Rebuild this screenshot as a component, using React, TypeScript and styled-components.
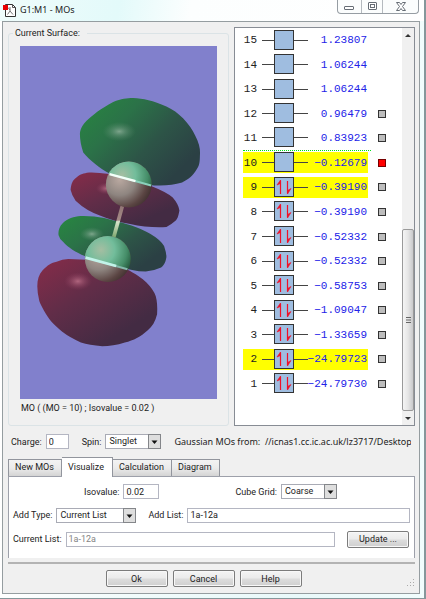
import React, { useState } from "react";
import styled, { createGlobalStyle } from "styled-components";

const UI_FONT = 'Roboto, Arial, sans-serif';
const TITLE_FONT = '"Noto Sans", "Open Sans", sans-serif';
const MONO_FONT = '"Liberation Mono", "Courier New", monospace';

const GlobalStyle = createGlobalStyle`
  *, *::before, *::after { box-sizing: border-box; }
  body { margin: 0; background: #eef8f9; }
  button, input, select { font: inherit; color: inherit; margin: 0; }
`;

const Frame = styled.div`
  display: flex;
  flex-direction: column;
  min-height: 100vh;
  border: solid #85979b;
  border-width: 0 2px 2px 0;
  background: linear-gradient(90deg, #ffffff 0, #f2fcfc 30%, #e9f9fa 70%, #f1fdfd 100%);
  font: 9px/12px ${UI_FONT};
  color: #222;
`;

const TitleBar = styled.header`
  display: flex;
  align-items: flex-start;
  height: 21px;
  padding-left: 3px;
  background: linear-gradient(100deg, #effcfb 0, #e3fafa 28%, #fcfefe 45%, #ffffff 100%);
`;

const AppIcon = styled.svg`
  width: 13px;
  height: 14px;
  margin: 3px 4px 0 0;
`;

const Title = styled.h1`
  flex: 1;
  margin: 3px 0 0;
  font: 9px/14px ${TITLE_FONT};
  color: #222;
`;

const WindowButtons = styled.div`
  display: flex;
  height: 14px;
  margin-right: 5px;
  border: 1px solid #969da3;
  border-top: 0;
  border-radius: 0 0 4px 4px;
  background: #fbfdfd;
`;

const WindowButton = styled.button<{ $width: number }>`
  display: grid;
  place-items: center;
  width: ${(p) => p.$width}px;
  padding: 0;
  border: 0;
  background: none;

  & + & {
    border-left: 1px solid #b5babf;
  }
`;

const Client = styled.main`
  flex: 1;
  display: flex;
  flex-direction: column;
  min-width: 0;
  margin: 0 4px 4px 2px;
  padding: 5px 4px 6px 5px;
  border: 1px solid #959da0;
  background: #f0f0f0;
`;

const Views = styled.div`
  flex: 1;
  display: grid;
  grid-template-columns: minmax(0, 1fr) 181px;
  gap: 5px;
`;

const Surface = styled.fieldset`
  display: flex;
  flex-direction: column;
  min-width: 0;
  margin: 0;
  padding: 6px 11px 11px;
  border: 1px solid #dbe3e6;
  border-radius: 3px;

  legend {
    margin-left: -7px;
    padding: 0 7px 0 2px;
    line-height: 13px;
  }
`;

const Viewport = styled.div`
  flex: 1;
  display: flex;
  background: #8180cc;

  svg {
    width: 100%;
    height: 353px;
  }
`;

const Caption = styled.p`
  margin: 3px 0 0 1px;
`;

const LevelPanel = styled.section`
  display: flex;
  border: 1px solid #878c94;
  background: #fff;
`;

const LevelList = styled.ul`
  flex: 1;
  display: grid;
  grid-auto-rows: 1fr;
  margin: 0;
  padding: 0 0 29px 8px;
  list-style: none;
  font: 11px/20px ${MONO_FONT};
`;

const LevelRow = styled.li`
  display: flex;
  align-items: center;
  gap: 7px;
`;

const LevelCell = styled.div<{ $gap: boolean }>`
  display: flex;
  align-items: center;
  width: 128px;
  height: 100%;
  border-bottom: ${(p) => (p.$gap ? "1px dotted #00e018" : "0")};
`;

const Level = styled.div<{ $marked: boolean }>`
  display: flex;
  align-items: center;
  width: 125px;
  height: 21px;
  background: ${(p) => (p.$marked ? "#ffff00" : "transparent")};
`;

const LevelNumber = styled.span`
  display: flex;
  justify-content: flex-end;
  width: 14px;
  margin-right: 5px;
  color: #222;
`;

const Energy = styled.output`
  flex: 1;
  display: flex;
  justify-content: flex-end;
  margin: 0 1px 0 -10px;
  color: #2222e8;
`;

const Orbital = styled.svg`
  width: 46px;
  height: 21px;
`;

const LevelCheck = styled.input<{ $active: boolean }>`
  appearance: none;
  width: 8px;
  height: 8px;
  border: 1px solid ${(p) => (p.$active ? "#700" : "#333")};
  background: ${(p) => (p.$active ? "#f00" : "#bdbdbd")};
`;

const ScrollBar = styled.div`
  display: flex;
  flex-direction: column;
  width: 12px;
  background: #f0f0f0;
`;

const ScrollButton = styled.button`
  display: grid;
  place-items: center;
  height: 14px;
  padding: 0;
  border: 0;
  background: #f0f0f0;
`;

const ScrollSpace = styled.div`
  flex: 188;
`;

const ScrollThumb = styled.div`
  flex: 181;
  display: grid;
  place-items: center;
  border: 1px solid #9a9a9a;
  border-radius: 2px;
  background: linear-gradient(90deg, #f5f5f5, #e6e6e6 50%, #c9c9cb);
`;

const StateRow = styled.div`
  display: flex;
  align-items: center;
  gap: 5px;
  height: 15px;
  margin: 8px 4px 8px 3px;
`;

const Field = styled.label<{ $grow?: boolean; $gap?: number }>`
  display: flex;
  align-items: center;
  gap: 4px;
  min-width: 0;
  flex: ${(p) => (p.$grow ? "1" : "none")};
  margin-left: ${(p) => p.$gap ?? 0}px;
  white-space: nowrap;
`;

const TextBox = styled.input<{ $width?: number }>`
  ${(p) => (p.$width ? `width: ${p.$width}px;` : "flex: 1; width: 0;")}
  height: 15px;
  padding: 0 2px;
  border: 1px solid #b4b6c2;
  border-radius: 0;
  background: #fff;

  &:disabled {
    color: #858585;
  }
`;

const SelectBox = styled.span<{ $width: number }>`
  position: relative;
  display: flex;
  width: ${(p) => p.$width}px;
  height: 15px;

  select {
    appearance: none;
    width: 100%;
    padding: 0 14px 1px 3px;
    border: 1px solid #a9abb5;
    border-radius: 0;
    background: #fff;
  }

  svg {
    position: absolute;
    top: 0;
    right: 0;
    width: 13px;
    height: 15px;
    pointer-events: none;
  }
`;

const Source = styled.span`
  flex: 1;
  min-width: 0;
  margin-left: 8px;
  overflow: hidden;
  font: 9px/15px ${TITLE_FONT};
  white-space: pre;
`;

const Tabs = styled.div`
  display: flex;
  align-items: flex-end;
  height: 19px;
`;

const Tab = styled.button<{ $active: boolean; $width: number }>`
  width: ${(p) => p.$width}px;
  height: ${(p) => (p.$active ? 20 : 17)}px;
  margin-bottom: ${(p) => (p.$active ? -1 : 0)}px;
  padding: 0 6px 2px;
  border: 1px solid #92959d;
  border-left-width: ${(p) => (p.$active ? 0 : 1)}px;
  border-bottom: 0;
  background: ${(p) => (p.$active ? "#fff" : "linear-gradient(#f3f3f3, #ebebeb 50%, #d4d4d4)")};
  text-align: left;
  white-space: nowrap;
  z-index: ${(p) => (p.$active ? 1 : 0)};

  & + & {
    border-left: 0;
  }
`;

const TabPanel = styled.section`
  display: flex;
  flex-direction: column;
  gap: 8px;
  padding: 7px 4px 11px;
  border: 1px solid #9da0aa;
  border-bottom: 0;
  background: #fff;
`;

const FormRow = styled.div<{ $indent?: number }>`
  display: flex;
  align-items: center;
  height: ${(p) => (p.$indent ? 15 : 16)}px;
  padding-left: ${(p) => p.$indent ?? 0}px;
`;

const PushButton = styled.button`
  width: 62px;
  height: 17px;
  padding: 0;
  border: 1px solid #7c7c7c;
  border-radius: 2px;
  background: linear-gradient(#f4f4f4, #ebebeb 48%, #dddddd 52%, #cfcfcf);
  box-shadow: inset 0 0 0 1px #f8f8f8;
`;

const UpdateSlot = styled.div`
  flex: none;
  display: flex;
  margin-left: 12px;
  padding-right: 1px;
`;

const Divider = styled.hr`
  width: 100%;
  height: 2px;
  margin: 4px 0 6px;
  border: 0;
  background: #b3b3b3;
`;

const Footer = styled.footer`
  display: grid;
  grid-template-columns: 1fr auto 1fr;
  align-items: end;
`;

const FooterButtons = styled.div`
  grid-column: 2;
  display: flex;
  gap: 5px;
  margin-right: 16px;
`;

const Grip = styled.svg`
  width: 8px;
  height: 8px;
  justify-self: end;
`;

type LevelData = { n: number; energy: string; filled?: boolean; marked?: boolean; gap?: boolean };

const LEVELS: LevelData[] = [
  { n: 15, energy: "1.23807" },
  { n: 14, energy: "1.06244" },
  { n: 13, energy: "1.06244" },
  { n: 12, energy: "0.96479" },
  { n: 11, energy: "0.83923", gap: true },
  { n: 10, energy: "−0.12679", marked: true },
  { n: 9, energy: "−0.39190", filled: true, marked: true },
  { n: 8, energy: "−0.39190", filled: true },
  { n: 7, energy: "−0.52332", filled: true },
  { n: 6, energy: "−0.52332", filled: true },
  { n: 5, energy: "−0.58753", filled: true },
  { n: 4, energy: "−1.09047", filled: true },
  { n: 3, energy: "−1.33659", filled: true },
  { n: 2, energy: "−24.79723", filled: true, marked: true },
  { n: 1, energy: "−24.79730", filled: true },
];

const TABS = [
  { name: "New MOs", width: 54 },
  { name: "Visualize", width: 51 },
  { name: "Calculation", width: 59 },
  { name: "Diagram", width: 48 },
];

function OrbitalBox({ filled }: { filled?: boolean }) {
  return (
    <Orbital viewBox="0 0 46 21" aria-hidden="true">
      <path d="M0 10.5H46" stroke="#444" strokeWidth="1" />
      <rect x="12.5" y="0.5" width="19" height="19" fill="#9fbde0" stroke="#333" />
      {filled && (
        <g stroke="#f01028" fill="#f01028">
          <path d="M18.5 17V3.5" strokeWidth="1.2" />
          <path d="M18.500 3L15 8L18.500 6.500Z" strokeWidth="0.6" />
          <path d="M25.500 4V16.5" strokeWidth="1.2" />
          <path d="M25.500 17L29 11.500L25.500 13.500Z" strokeWidth="0.6" />
        </g>
      )}
    </Orbital>
  );
}

function Molecule() {
  return (
    <svg viewBox="60 18 592 1059" preserveAspectRatio="xMidYMin meet" role="img" aria-label="Molecular orbital surface">
      <defs>
        <linearGradient id="green" x1="0" y1="0.2" x2="0.85" y2="0.8">
          <stop offset="0" stopColor="#288242" />
          <stop offset="0.3" stopColor="#2b7248" />
          <stop offset="0.65" stopColor="#2d5447" />
          <stop offset="1" stopColor="#2b4044" />
        </linearGradient>
        <linearGradient id="red" x1="0.05" y1="0.1" x2="0.7" y2="0.85">
          <stop offset="0" stopColor="#802c49" />
          <stop offset="0.45" stopColor="#612d48" />
          <stop offset="1" stopColor="#432b43" />
        </linearGradient>
        <radialGradient id="shine">
          <stop offset="0" stopColor="#a0bca8" stopOpacity="0.7" />
          <stop offset="0.4" stopColor="#83a891" stopOpacity="0.4" />
          <stop offset="1" stopColor="#609070" stopOpacity="0" />
        </radialGradient>
        <radialGradient id="redShine">
          <stop offset="0" stopColor="#c77890" stopOpacity="0.75" />
          <stop offset="1" stopColor="#904060" stopOpacity="0" />
        </radialGradient>
        <radialGradient id="atomGreen" cx="0.35" cy="0.3" r="0.75">
          <stop offset="0" stopColor="#a5bea2" />
          <stop offset="0.4" stopColor="#72bd9b" />
          <stop offset="0.75" stopColor="#458d68" />
          <stop offset="1" stopColor="#1f5137" />
        </radialGradient>
        <radialGradient id="atomGrey" cx="0.3" cy="0.4" r="0.75">
          <stop offset="0" stopColor="#b9a8a0" />
          <stop offset="0.45" stopColor="#8e8580" />
          <stop offset="0.8" stopColor="#5b4543" />
          <stop offset="1" stopColor="#3f302f" />
        </radialGradient>
        <linearGradient id="bond" x1="0" y1="0" x2="0" y2="1">
          <stop offset="0" stopColor="#927675" />
          <stop offset="0.45" stopColor="#a48a87" />
          <stop offset="0.5" stopColor="#d7e5cc" />
          <stop offset="1" stopColor="#7da56d" />
        </linearGradient>
        <clipPath id="upperCap">
          <path d="M310 350H470V441L320 400Z" />
        </clipPath>
        <clipPath id="lowerCap">
          <path d="M240 570H410V695L250 652Z" />
        </clipPath>
      </defs>
      <path fill="url(#green)" d="M240 282C241 265 251 252 260 243C280 224 302 206 340 186C365 176 380 174 400 174C430 175 460 182 500 200C520 209 534 220 550 235C567 253 579 270 586 286C597 307 602 325 601 340C600 357 602 372 592 387C580 408 565 420 547 428C525 434 500 438 472 437C448 437 418 430 400 425C370 416 350 410 329 401C300 386 270 362 250 338Q240 308 240 282Z" />
      <path fill="url(#red)" d="M212 450C214 430 219 423 225 417C238 405 247 402 261 399C280 396 300 400 329 403L450 437Q501 457 519 473Q537 494 539 512C537 520 537 531 529 542Q516 554 500 562C466 564 426 561 391 553Q343 545 300 527Q260 514 227 483Q215 465 212 450Z" />
      <path fill="url(#green)" d="M176 587C174 575 178 561 187 552C203 536 222 531 242 529Q280 528 313 535L370 550C403 559 425 568 451 582Q482 600 493 619Q500 640 500 652C498 665 495 675 484 684Q463 694 438 696C410 695 384 688 355 681L257 650C230 640 204 623 190 607Q178 597 176 587Z" />
      <path fill="url(#red)" d="M112 740C112 720 117 704 128 692C143 676 154 669 170 666Q187 658 205 658L260 660L382 690C406 702 428 717 440 729Q461 750 468 770Q474 792 472 824C467 846 457 862 444 872C422 892 402 902 375 909C351 917 329 920 307 920C281 918 260 914 243 909Q209 894 187 877Q166 859 154 846C138 825 124 800 118 784Q112 760 112 740Z" />
      <ellipse cx="358" cy="275" rx="50" ry="29" fill="url(#shine)" />
      <ellipse cx="276" cy="583" rx="36" ry="21" fill="url(#shine)" />
      <ellipse cx="320" cy="446" rx="32" ry="18" fill="url(#redShine)" />
      <ellipse cx="234" cy="725" rx="42" ry="27" fill="url(#redShine)" />
      <path d="M362 498L373 500L347 594L336 592Z" fill="url(#bond)" />
      <circle cx="387" cy="434" r="69" fill="url(#atomGrey)" />
      <circle cx="387" cy="434" r="69" fill="url(#atomGreen)" clipPath="url(#upperCap)" />
      <path d="M330 403L392 420L454 437" fill="none" stroke="#8ad1bb" strokeWidth="6" />
      <path d="M329 403L407 424" stroke="#f5fff9" strokeWidth="7" />
      <circle cx="324" cy="658" r="69" fill="url(#atomGrey)" />
      <circle cx="324" cy="658" r="69" fill="url(#atomGreen)" clipPath="url(#lowerCap)" />
      <path d="M257 654L383 689" stroke="#84b8ac" strokeWidth="6" />
      <path d="M257 654L349 679" stroke="#c2f3e9" strokeWidth="8" />
    </svg>
  );
}

function Choice({ width, options }: { width: number; options: string[] }) {
  return (
    <SelectBox $width={width}>
      <select>
        {options.map((option) => (
          <option key={option}>{option}</option>
        ))}
      </select>
      <svg viewBox="0 0 13 15" aria-hidden="true">
        <rect x="0.5" y="0.5" width="12" height="14" fill="#dedede" stroke="#84868a" />
        <path d="M3.500 6.500H9.500L6.500 10Z" fill="#111" />
      </svg>
    </SelectBox>
  );
}

export default function App() {
  const [tab, setTab] = useState("Visualize");
  const [shown, setShown] = useState(10);

  return (
    <>
      <GlobalStyle />
      <Frame>
        <TitleBar>
          <AppIcon viewBox="0 0 13 14" aria-hidden="true">
            <path d="M2.500 1.500H9.500L12.500 4.500V13.500H2.500Z" fill="#fff" stroke="#333" />
            <path d="M9.500 1.500V4.500H12.500" fill="none" stroke="#555" />
            <path d="M7 4V8L4.500 11.500M7 8L10 11.500M5 4.500L7 7" fill="none" stroke="#777" />
            <rect x="0" y="2" width="5" height="5" fill="#e80000" />
          </AppIcon>
          <Title>G1:M1 - MOs</Title>
          <WindowButtons>
            <WindowButton $width={23} aria-label="Minimize">
              <svg width="11" height="9" viewBox="0 0 11 9">
                <rect x="0.5" y="4.500" width="9" height="3" rx="0.5" fill="#fff" stroke="#666d75" />
              </svg>
            </WindowButton>
            <WindowButton $width={21} aria-label="Maximize">
              <svg width="9" height="9" viewBox="0 0 9 9">
                <rect x="0.5" y="0.5" width="8" height="7" rx="0.5" fill="#fff" stroke="#666d75" />
                <rect x="2.500" y="2.500" width="4" height="3" fill="#fff" stroke="#666d75" />
              </svg>
            </WindowButton>
            <WindowButton $width={36} aria-label="Close">
              <svg width="10" height="9" viewBox="0 0 10 9">
                <path d="M0.5 0.5H3.500L5 2.500L6.500 0.5H9.500L6.500 4.500L9.500 8.500H6.500L5 6.500L3.500 8.500H0.5L3.500 4.500Z" fill="#fff" stroke="#666d75" />
              </svg>
            </WindowButton>
          </WindowButtons>
        </TitleBar>

        <Client>
          <Views>
            <Surface>
              <legend>Current Surface:</legend>
              <Viewport>
                <Molecule />
              </Viewport>
              <Caption>MO ( (MO = 10) ; Isovalue = 0.02 )</Caption>
            </Surface>

            <LevelPanel aria-label="Orbital energies">
              <LevelList>
                {LEVELS.map((level) => (
                  <LevelRow key={level.n}>
                    <LevelCell $gap={!!level.gap}>
                      <Level $marked={!!level.marked}>
                        <LevelNumber>{level.n}</LevelNumber>
                        <OrbitalBox filled={level.filled} />
                        <Energy>{level.energy}</Energy>
                      </Level>
                    </LevelCell>
                    {level.n <= 12 && (
                      <LevelCheck
                        type="checkbox"
                        aria-label={`Show orbital ${level.n}`}
                        $active={shown === level.n}
                        checked={shown === level.n}
                        onChange={() => setShown(level.n)}
                      />
                    )}
                  </LevelRow>
                ))}
              </LevelList>
              <ScrollBar>
                <ScrollButton aria-label="Scroll up">
                  <svg width="6" height="3" viewBox="0 0 6 3"><path d="M0 3H6L3 0Z" fill="#333" /></svg>
                </ScrollButton>
                <ScrollSpace />
                <ScrollThumb>
                  <svg width="5" height="6" viewBox="0 0 5 6"><path d="M0 0.5H5M0 3H5M0 5.500H5" stroke="#666" /></svg>
                </ScrollThumb>
                <ScrollButton aria-label="Scroll down">
                  <svg width="6" height="3" viewBox="0 0 6 3"><path d="M0 0H6L3 3Z" fill="#333" /></svg>
                </ScrollButton>
              </ScrollBar>
            </LevelPanel>
          </Views>

          <StateRow>
            <Field>
              Charge:
              <TextBox $width={23} defaultValue="0" />
            </Field>
            <Field $gap={8}>
              Spin:
              <Choice width={56} options={["Singlet", "Triplet"]} />
            </Field>
            <Source>{"Gaussian MOs from:  //icnas1.cc.ic.ac.uk/lz3717/Desktop"}</Source>
          </StateRow>

          <Tabs role="tablist">
            {TABS.map(({ name, width }) => (
              <Tab key={name} role="tab" aria-selected={tab === name} $active={tab === name} $width={width} onClick={() => setTab(name)}>
                {name}
              </Tab>
            ))}
          </Tabs>
          <TabPanel role="tabpanel">
            <FormRow $indent={71}>
              <Field>
                Isovalue:
                <TextBox $width={36} defaultValue="0.02" />
              </Field>
              <Field $gap={76}>
                Cube Grid:
                <Choice width={56} options={["Coarse", "Medium", "Fine"]} />
              </Field>
            </FormRow>
            <FormRow>
              <Field>
                Add Type:
                <Choice width={80} options={["Current List", "Range"]} />
              </Field>
              <Field $grow $gap={12}>
                Add List:
                <TextBox defaultValue="1a-12a" />
              </Field>
            </FormRow>
            <FormRow>
              <Field $grow>
                Current List:
                <TextBox defaultValue="1a-12a" disabled />
              </Field>
              <UpdateSlot>
                <PushButton>Update ...</PushButton>
              </UpdateSlot>
            </FormRow>
          </TabPanel>
          <Divider />
          <Footer>
            <FooterButtons>
              <PushButton>Ok</PushButton>
              <PushButton>Cancel</PushButton>
              <PushButton>Help</PushButton>
            </FooterButtons>
            <Grip viewBox="0 0 8 8" aria-hidden="true">
              <path d="M6 0h1v1h-1zM3 3h1v1h-1zM6 3h1v1h-1zM0 6h1v1h-1zM3 6h1v1h-1zM6 6h1v1h-1z" fill="#aaa" />
            </Grip>
          </Footer>
        </Client>
      </Frame>
    </>
  );
}
